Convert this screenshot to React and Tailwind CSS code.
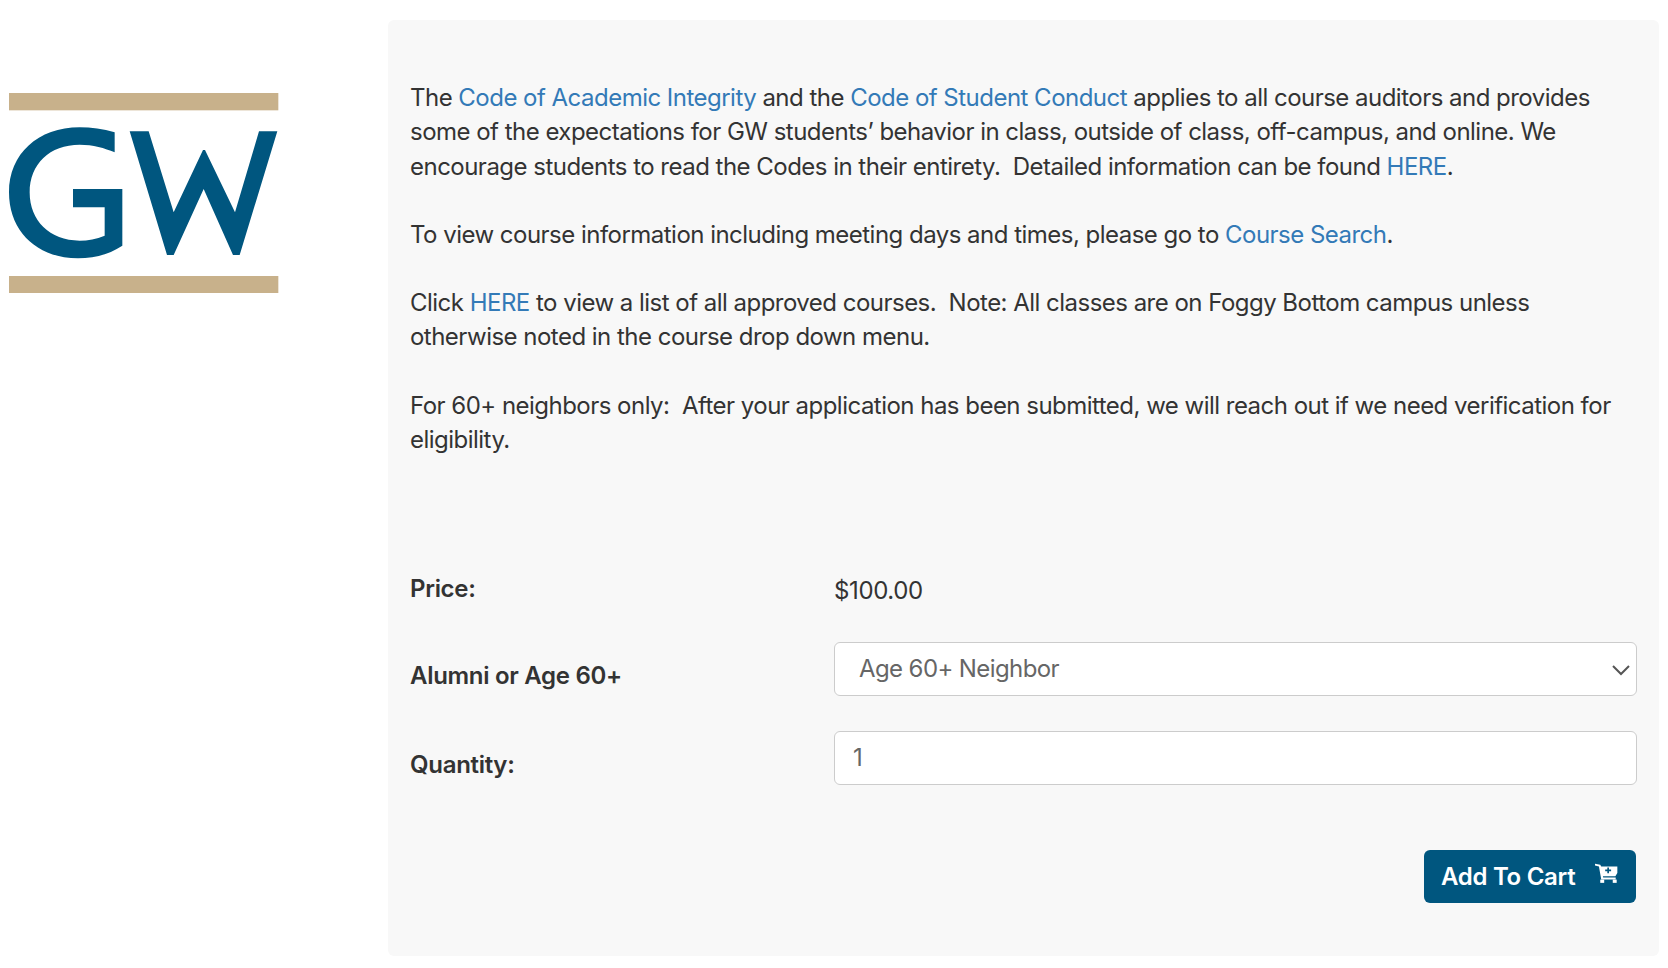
import React from 'react';

function Logo() {
  return (
    <svg width="270" height="200" viewBox="28 67 810 600" className="block">
      <rect x="28" y="67" width="808" height="52" fill="#c8b18b" />
      <rect x="28" y="616" width="808" height="51" fill="#c8b18b" />
      <path
        fill="#00567f"
        d="M345 185 C310 175 275 170 240 170 C115 170 28 250 28 365 C28 485 115 563 235 563 C285 563 330 550 368 525 L368 355 L220 355 L220 410 L315 410 L315 495 C290 505 265 510 240 510 C150 510 90 450 90 365 C90 280 150 222 240 222 C280 222 315 232 345 245 Z"
      />
      <path
        fill="#00567f"
        d="M390 182 L447 182 L522 425 L610 238 L616 238 L706 425 L778 182 L833 182 L720 553 L700 553 L612 355 L522 553 L502 553 Z"
      />
    </svg>
  );
}

function Cart() {
  return (
    <svg width="23" height="20" viewBox="222 70 70 60">
      <path fill="#fff" d="M222 72 L238 75 L241 80 L290 80 L290 100 L284 110 L246 110 L247 114 L285 114 L285 120 L241 120 L234 80 L222 77 Z" />
      <rect x="238" y="120" width="12" height="10" fill="#fff" />
      <rect x="276" y="120" width="12" height="10" fill="#fff" />
      <path stroke="#00567f" strokeWidth="5" d="M262 83 V101 M253 92 H271" />
    </svg>
  );
}

export default function App() {
  const link = 'text-[#337ab7]';
  return (
    <div className="min-h-[968px] bg-white flex items-start pt-5 pl-[9px] pr-[9px] font-['Inter',sans-serif] text-[24px] leading-[34.3px] text-[#333]">
      <div className="w-[379px] shrink-0 pt-[73px]">
        <Logo />
      </div>
      <div className="flex-1 h-[936px] bg-[#f8f8f8] rounded-md pt-[61px] pl-[22px] pr-[22px]">
        <div className="tracking-[-0.52px]">
          <p>
            The <a className={link}>Code of Academic Integrity</a> and the <a className={link}>Code of Student Conduct</a> applies to all course auditors and provides some of the expectations for GW students’ behavior in class, outside of class, off-campus, and online. We encourage students to read the Codes in their entirety.&nbsp; Detailed information can be found <a className={link}>HERE</a>.
          </p>
          <p className="mt-[34px]">
            To view course information including meeting days and times, please go to <a className={link}>Course Search</a>.
          </p>
          <p className="mt-[34px]">
            Click <a className={link}>HERE</a> to view a list of all approved courses.&nbsp; Note: All classes are on Foggy Bottom campus unless otherwise noted in the course drop down menu.
          </p>
          <p className="mt-[34px]">
            For 60+ neighbors only:&nbsp; After your application has been submitted, we will reach out if we need verification for eligibility.
          </p>
        </div>
        <div className="mt-[115px] flex items-center h-[34px]">
          <div className="w-[424px] font-semibold tracking-[-0.3px]">Price:</div>
          <div className="pt-1 tracking-[-0.38px]">$100.00</div>
        </div>
        <div className="mt-[36px] flex items-center">
          <div className="w-[424px] font-semibold pt-[14px] tracking-[-0.3px]">Alumni or Age 60+</div>
          <div className="flex-1 relative h-[54px] bg-white border border-[#ccc] rounded-md flex items-center pl-6 text-[#666] tracking-[-0.6px]">
            Age 60+ Neighbor
            <svg className="absolute right-[5px] top-[21px]" width="20" height="12" viewBox="0 0 20 12" fill="none">
              <path d="M2 2l8 8 8-8" stroke="#555" strokeWidth="2" />
            </svg>
          </div>
        </div>
        <div className="mt-[35px] flex items-center">
          <div className="w-[424px] font-semibold pt-[13px] tracking-[-0.3px]">Quantity:</div>
          <div className="flex-1 h-[54px] bg-white border border-[#ccc] rounded-md flex items-center pl-[18px] text-[#666]">1</div>
        </div>
        <div className="mt-[65px] flex justify-end pr-px">
          <button className="h-[53px] w-[212px] bg-[#00567f] rounded-md text-white font-semibold flex items-center pl-[17px] tracking-[-0.3px]">
            Add To Cart
            <span className="ml-5 -mt-2"><Cart /></span>
          </button>
        </div>
      </div>
    </div>
  );
}
